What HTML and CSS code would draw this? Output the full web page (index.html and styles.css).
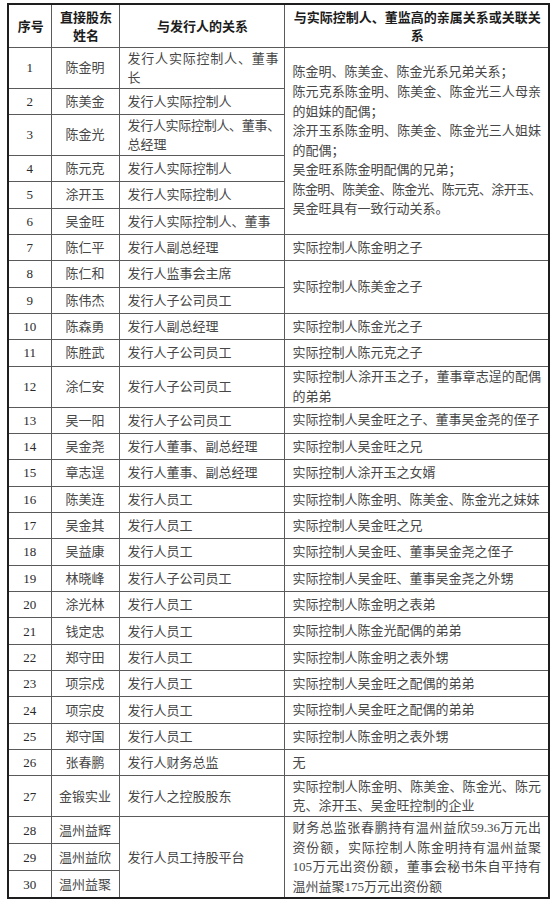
FILE: index.html
```html
<!DOCTYPE html>
<html lang="zh-CN">
<head>
<meta charset="utf-8">
<title>股东关系表</title>
<link rel="stylesheet" href="styles.css">
</head>
<body>
<table class="rel">
  <colgroup>
    <col class="c-no">
    <col class="c-name">
    <col class="c-role">
    <col class="c-rel">
  </colgroup>
  <thead>
    <tr class="h-head">
      <th>序号</th>
      <th><span class="ln">直接股东</span><span class="ln">姓名</span></th>
      <th>与发行人的关系</th>
      <th><span class="ln">与实际控制人、董监高的亲属关系或关联关</span><span class="ln">系</span></th>
    </tr>
  </thead>
  <tbody>
    <tr class="h2">
      <td class="no">1</td><td class="nm">陈金明</td>
      <td class="ro"><span class="ln fl">发行人实际控制人、董事</span><span class="ln">长</span></td>
      <td class="re" rowspan="6">
        <span class="ln">陈金明、陈美金、陈金光系兄弟关系；</span>
        <span class="ln fl">陈元克系陈金明、陈美金、陈金光三人母亲</span>
        <span class="ln">的姐妹的配偶；</span>
        <span class="ln fl">涂开玉系陈金明、陈美金、陈金光三人姐妹</span>
        <span class="ln">的配偶；</span>
        <span class="ln">吴金旺系陈金明配偶的兄弟；</span>
        <span class="ln fl tight">陈金明、陈美金、陈金光、陈元克、涂开玉、</span>
        <span class="ln">吴金旺具有一致行动关系。</span>
      </td>
    </tr>
    <tr class="h1"><td class="no">2</td><td class="nm">陈美金</td><td class="ro">发行人实际控制人</td></tr>
    <tr class="h2">
      <td class="no">3</td><td class="nm">陈金光</td>
      <td class="ro"><span class="ln fl tight3">发行人实际控制人、董事、</span><span class="ln">总经理</span></td>
    </tr>
    <tr class="h1"><td class="no">4</td><td class="nm">陈元克</td><td class="ro">发行人实际控制人</td></tr>
    <tr class="h1"><td class="no">5</td><td class="nm">涂开玉</td><td class="ro">发行人实际控制人</td></tr>
    <tr class="h1"><td class="no">6</td><td class="nm">吴金旺</td><td class="ro">发行人实际控制人、董事</td></tr>
    <tr class="h1"><td class="no">7</td><td class="nm">陈仁平</td><td class="ro">发行人副总经理</td><td class="re">实际控制人陈金明之子</td></tr>
    <tr class="h1"><td class="no">8</td><td class="nm">陈仁和</td><td class="ro">发行人监事会主席</td><td class="re" rowspan="2">实际控制人陈美金之子</td></tr>
    <tr class="h1"><td class="no">9</td><td class="nm">陈伟杰</td><td class="ro">发行人子公司员工</td></tr>
    <tr class="h1"><td class="no">10</td><td class="nm">陈森勇</td><td class="ro">发行人副总经理</td><td class="re">实际控制人陈金光之子</td></tr>
    <tr class="h1"><td class="no">11</td><td class="nm">陈胜武</td><td class="ro">发行人子公司员工</td><td class="re">实际控制人陈元克之子</td></tr>
    <tr class="h2">
      <td class="no">12</td><td class="nm">涂仁安</td><td class="ro">发行人子公司员工</td>
      <td class="re"><span class="ln fl">实际控制人涂开玉之子，董事章志逞的配偶</span><span class="ln">的弟弟</span></td>
    </tr>
    <tr class="h1"><td class="no">13</td><td class="nm">吴一阳</td><td class="ro">发行人子公司员工</td><td class="re">实际控制人吴金旺之子、董事吴金尧的侄子</td></tr>
    <tr class="h1"><td class="no">14</td><td class="nm">吴金尧</td><td class="ro">发行人董事、副总经理</td><td class="re">实际控制人吴金旺之兄</td></tr>
    <tr class="h1"><td class="no">15</td><td class="nm">章志逞</td><td class="ro">发行人董事、副总经理</td><td class="re">实际控制人涂开玉之女婿</td></tr>
    <tr class="h1"><td class="no">16</td><td class="nm">陈美连</td><td class="ro">发行人员工</td><td class="re">实际控制人陈金明、陈美金、陈金光之妹妹</td></tr>
    <tr class="h1"><td class="no">17</td><td class="nm">吴金其</td><td class="ro">发行人员工</td><td class="re">实际控制人吴金旺之兄</td></tr>
    <tr class="h1"><td class="no">18</td><td class="nm">吴益康</td><td class="ro">发行人员工</td><td class="re">实际控制人吴金旺、董事吴金尧之侄子</td></tr>
    <tr class="h1"><td class="no">19</td><td class="nm">林晓峰</td><td class="ro">发行人子公司员工</td><td class="re">实际控制人吴金旺、董事吴金尧之外甥</td></tr>
    <tr class="h1"><td class="no">20</td><td class="nm">涂光林</td><td class="ro">发行人员工</td><td class="re">实际控制人陈金明之表弟</td></tr>
    <tr class="h1"><td class="no">21</td><td class="nm">钱定忠</td><td class="ro">发行人员工</td><td class="re">实际控制人陈金光配偶的弟弟</td></tr>
    <tr class="h1"><td class="no">22</td><td class="nm">郑守田</td><td class="ro">发行人员工</td><td class="re">实际控制人陈金明之表外甥</td></tr>
    <tr class="h1"><td class="no">23</td><td class="nm">项宗戍</td><td class="ro">发行人员工</td><td class="re">实际控制人吴金旺之配偶的弟弟</td></tr>
    <tr class="h1"><td class="no">24</td><td class="nm">项宗皮</td><td class="ro">发行人员工</td><td class="re">实际控制人吴金旺之配偶的弟弟</td></tr>
    <tr class="h1"><td class="no">25</td><td class="nm">郑守国</td><td class="ro">发行人员工</td><td class="re">实际控制人陈金明之表外甥</td></tr>
    <tr class="h1"><td class="no">26</td><td class="nm">张春鹏</td><td class="ro">发行人财务总监</td><td class="re">无</td></tr>
    <tr class="h2">
      <td class="no">27</td><td class="nm">金锻实业</td><td class="ro">发行人之控股股东</td>
      <td class="re"><span class="ln fl">实际控制人陈金明、陈美金、陈金光、陈元</span><span class="ln">克、涂开玉、吴金旺控制的企业</span></td>
    </tr>
    <tr class="h3">
      <td class="no">28</td><td class="nm">温州益辉</td>
      <td class="ro" rowspan="3">发行人员工持股平台</td>
      <td class="re" rowspan="3">
        <span class="ln fl">财务总监张春鹏持有温州益欣59.36万元出</span>
        <span class="ln fl">资份额，实际控制人陈金明持有温州益聚</span>
        <span class="ln fl">105万元出资份额，董事会秘书朱自平持有</span>
        <span class="ln">温州益聚175万元出资份额</span>
      </td>
    </tr>
    <tr class="h3"><td class="no">29</td><td class="nm">温州益欣</td></tr>
    <tr class="h3"><td class="no">30</td><td class="nm">温州益聚</td></tr>
  </tbody>
</table>
</body>
</html>
```

FILE: styles.css
```css
html, body {
  margin: 0;
  padding: 0;
  background: #ffffff;
}

body {
  font-family: "Liberation Serif", "Noto Sans CJK SC", serif;
  font-size: 13px;
  color: #474747;
}

.rel {
  margin: 3px 0 0 7px;
  width: 541px;
  table-layout: fixed;
  border-collapse: collapse;
  border: 2px solid #1e1e1e;
}

.c-no { width: 43px; }
.c-name { width: 68px; }
.c-role { width: 165px; }
.c-rel { width: 265px; }

.rel th,
.rel td {
  border: 1px solid #5a5a5a;
  padding: 0;
  vertical-align: middle;
  line-height: 19px;
  white-space: nowrap;
  overflow: visible;
}

.rel th {
  font-family: "Noto Sans CJK SC", sans-serif;
  font-weight: 700;
  color: #1c1c1c;
  text-align: center;
  line-height: 18px;
  padding: 0 5px 0 7px;
}

.h-head { height: 43px; }
.h1 { height: 26.35px; }
.h2 { height: 41px; }
.h3 { height: 27px; }

.ln { display: block; }

.fl {
  text-align: justify;
  text-align-last: justify;
}

.tight { letter-spacing: -0.65px; }
.tight3 { letter-spacing: -0.3px; }

.no {
  text-align: center;
  color: #2a2a2a;
}

.nm {
  text-align: center;
}

.ro {
  text-align: left;
  padding: 0 5px 0 8px !important;
}

.re {
  text-align: left;
  padding: 0 7px 0 8px !important;
  line-height: 19.6px !important;
}
```
